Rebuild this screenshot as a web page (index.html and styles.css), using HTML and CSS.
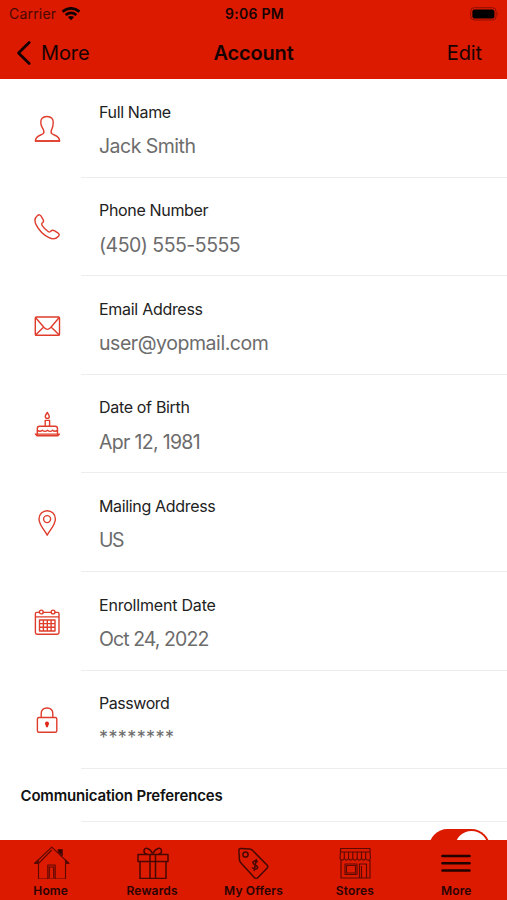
FILE: index.html
```html
<!DOCTYPE html>
<html lang="en">
<head>
<meta charset="utf-8">
<title>Account</title>
<link rel="stylesheet" href="styles.css">
</head>
<body>
<div class="screen">
  <header class="header">
    <div class="status">
      <div class="carrier"><span class="carrier-name">Carrier</span>
        <svg class="wifi" width="20" height="14" viewBox="0 0 20 14"><path d="M1.5 4.600Q10 -2 18.500 4.600M4.600 8Q10 3.800 15.400 8" fill="none" stroke="#100" stroke-width="2.6"/><path d="M6.900 10Q10 7.800 13.100 10L10 13.300Z" fill="#100"/></svg>
      </div>
      <div class="time">9:06 PM</div>
      <svg class="battery" width="30" height="14" viewBox="0 0 30 14"><rect x=".7" y=".7" width="25.4" height="12.3" rx="3.6" fill="none" stroke="#8f1000" stroke-width="1"/><rect x="2.4" y="2.4" width="22" height="9" rx="2" fill="#000"/><path d="M27.5 5q1.6 1.9 0 3.8z" fill="#8f1000"/></svg>
    </div>
    <nav class="nav">
      <div class="back"><svg width="16" height="26" viewBox="0 0 16 26"><path d="M13.2 2.5 2.5 13 13.2 23.5" fill="none" stroke="#140100" stroke-width="2.7" stroke-linecap="round" stroke-linejoin="round"/></svg><span class="back-label">More</span></div>
      <h1 class="title">Account</h1>
      <div class="edit">Edit</div>
    </nav>
  </header>
  <main class="list">
    <section class="row">
      <svg class="icon" viewBox="0 0 28 28"><path d="M14 1.500C9.500 1.500 7.500 4 7.800 8c.1 3 1.500 4.500 2.500 6.500.8 1.700.8 3.400-.3 4.300C8 20.500 2.600 20.400 2.400 26H26.600C26.400 20.400 21 20.500 19 18.800 17.900 17.900 17.900 16.200 18.700 14.500 19.700 12.500 20.100 11 20.200 8 20.500 4 18.500 1.500 14 1.500Z"/><path d="M2.500 26H26.500"/></svg>
      <div class="field"><div class="label l1">Full Name</div><div class="value v1">Jack Smith</div></div>
    </section>
    <section class="row">
      <svg class="icon" viewBox="0 0 28 28"><path d="M4.300 2.700C5.900 1.400 7 1.500 8.100 3.200L10 6.300c1 1.600.7 2.500-.5 3.500-1.200.9-1 1.700-.1 3 1.500 2.200 3.300 4 5.400 5.500 1.300 1 2.100 1.100 3-.1 1-1.200 2-1.400 3.500-.5l3.500 2.200c1.600 1 1.800 2.200.4 3.700-2.300 2.500-5.500 3-9.200 1.100C10.300 21.900 6 17.400 3.200 11.900 1.200 8 1.600 4.900 4.300 2.700Z"/></svg>
      <div class="field"><div class="label l2">Phone Number</div><div class="value v2">(450) 555-5555</div></div>
    </section>
    <section class="row">
      <svg class="icon" viewBox="0 0 28 28"><rect x="2.300" y="5" width="24.200" height="18.200" rx="1"/><path d="M2.700 5.800 11.300 15.800Q14.400 19 17.500 15.800L26 5.800M2.800 22.700 9.700 16M26 22.700 19.100 16"/></svg>
      <div class="field"><div class="label l3">Email Address</div><div class="value v3">user@yopmail.com</div></div>
    </section>
    <section class="row">
      <svg class="icon" viewBox="0 0 28 28"><path d="M14.300 2.500C12.700 4.800 11.600 6 12.500 7.500c.9 1.200 2.800 1.200 3.600 0C17 6 15.800 4.800 14.300 2.500ZM12.200 16.200V10.400H16.600V16.200M4.300 24V18.400Q4.300 16.200 6.500 16.200H22.300Q24.500 16.200 24.500 18.400V24M4.300 20c1.700 1.700 3.400 1.700 5.100.3 1.700 1.400 3.400 1.400 5.100 0 1.700 1.400 3.400 1.400 5.100 0 1.600 1.400 3.300 1.400 4.900-.3"/><path d="M2.400 24.100H26.500L24.800 25.800H4.100Z"/></svg>
      <div class="field"><div class="label l4">Date of Birth</div><div class="value v4">Apr 12, 1981</div></div>
    </section>
    <section class="row">
      <svg class="icon" viewBox="0 0 28 28"><path d="M14.200 26.200C11.400 20.900 6 15.700 6 9.900a8.200 8.200 0 0 1 16.400 0C22.400 15.700 17 20.900 14.200 26.200Z"/><circle cx="14.100" cy="10.100" r="3.500"/></svg>
      <div class="field"><div class="label l5">Mailing Address</div><div class="value v5">US</div></div>
    </section>
    <section class="row">
      <svg class="icon" viewBox="0 0 28 28"><path d="M6.300 4.400H3.800Q2.400 4.400 2.400 5.800V24.600Q2.400 26.200 4 26.200H24.400Q26 26.200 26 24.600V5.800Q26 4.400 24.600 4.400H22.100M10.300 4.400H18.100M2.400 8.900H26"/><circle cx="8.300" cy="4" r="1.900"/><circle cx="20.100" cy="4" r="1.900"/><path d="M6.500 12H22V23H6.500ZM6.500 15.600H22M6.500 19.300H22M10.400 12V23M14.300 12V23M18.100 12V23"/></svg>
      <div class="field"><div class="label l6">Enrollment Date</div><div class="value v6">Oct 24, 2022</div></div>
    </section>
    <section class="row">
      <svg class="icon" viewBox="0 0 28 28"><rect x="4.400" y="11.500" width="19.400" height="14.700" rx="1.500"/><path d="M8.200 11.300V7.800C8.200 4.200 10.300 2 14 2S19.800 4.200 19.800 7.800V11.300"/><path class="keyhole" d="M14 15.500a2.100 2.100 0 0 1 1.500 3.500L14.800 21.300H13.200L12.500 19a2.100 2.100 0 0 1 1.500-3.500Z"/></svg>
      <div class="field"><div class="label l7">Password</div><div class="value v7">********</div></div>
    </section>
    <h2 class="section-title"><span class="section-text">Communication Preferences</span></h2>
    <div class="preference"><div class="toggle"><div class="knob"></div></div></div>
  </main>
  <footer class="tabs">
    <div class="tab"><svg width="40" height="36" viewBox="0 0 40 36"><path d="M3.500 20.500 20.800 4.200 38 20.500H34.500V36H7.500V20.500ZM7.500 20.500 20.800 7M16.800 35.500V22H24.200V35.500M18.300 35V24H22.700V35M27.500 8V7H31V13"/><path d="M4 20 7.500 17V20ZM37.500 20 34.500 17V20ZM27.200 6.500H31.200V12.500L27.200 9Z" fill="#300500"/></svg><span class="tab-label t1">Home</span></div>
    <div class="tab"><svg class="strong" width="40" height="36" viewBox="0 0 40 36"><path d="M6 11.500H36V18.500H6ZM8 18.500V35.500H34V18.500M18 11.500V35.500M23.500 11.500V35.500M20.500 10.500C18 5 12 3.500 12 8Q12 11 15 11M21 10.500C23.500 5 29.500 3.500 29.500 8Q29.500 11 26.500 11"/></svg><span class="tab-label t2">Rewards</span></div>
    <div class="tab"><svg class="strong" width="40" height="36" viewBox="0 0 40 36"><path d="M7.500 5.500 16.500 6Q18.500 6.200 20 7.800L34 22Q35.500 23.700 34 25.300L24.500 35Q23 36.200 21.500 34.700L8 20Q6.500 18.300 6.400 16.500L5.900 7.300Q5.900 5.400 7.500 5.500Z"/><circle cx="12.500" cy="11.500" r="2.600"/><path d="M24.800 19Q22 16.500 20 19C19 22.500 25.500 21.500 24.600 25Q22.500 27.500 19 24.500M23.500 16 21 28"/></svg><span class="tab-label t3">My Offers</span></div>
    <div class="tab"><svg width="40" height="36" viewBox="0 0 40 36"><path d="M5.500 5.500H35V9H5.500ZM5.500 9 5 15.500Q7.200 19 9.300 15.500 11.400 19 13.600 15.500 15.700 19 17.800 15.500 20 19 22.200 15.500 24.300 19 26.500 15.500 28.600 19 30.700 15.500 33 19 35.500 15.500L35 9M9.300 15.500V9M13.600 15.500V9M17.800 15.500V9M22.200 15.500V9M26.500 15.500V9M30.700 15.500V9M6 17V35H35V17M10 21H22V31.500H10ZM11.500 22.500H20.500V30H11.500ZM24.500 35V21H31.500V35M26.500 35V23"/></svg><span class="tab-label t4">Stores</span></div>
    <div class="tab"><svg class="menu" width="40" height="36" viewBox="0 0 40 36"><path d="M6.500 13H33.500M6.500 20.300H33.500M6.500 27.500H33.500"/></svg><span class="tab-label t5">More</span></div>
  </footer>
</div>
</body>
</html>
```
FILE: styles.css
```css
* { box-sizing: border-box; }
body { margin: 0; font-family: Inter, "Liberation Sans", sans-serif; background: #fff; }
.screen { width: 507px; height: 900px; overflow: hidden; display: flex; flex-direction: column; }
.header { height: 79.3px; flex: none; background: #db1a00; color: #180200; }
.status { height: 27px; display: grid; grid-template-columns: 1fr auto 1fr; align-items: center; padding: 0 7px 0 9px; }
.carrier { display: flex; align-items: center; gap: 5px; font-size: 14px; }
.carrier-name { letter-spacing: .2px; color: #4a0800; }
.time { font-size: 14px; font-weight: 600; letter-spacing: .3px; }
.battery { justify-self: end; }
.nav { height: 51px; display: grid; grid-template-columns: 1fr auto 1fr; align-items: center; padding: 0 25px 0 16px; font-size: 20px; }
.back { display: flex; align-items: center; gap: 9px; }
.back-label { letter-spacing: -.1px; }
.title { margin: 0 -4.500px 0 4.500px; font-size: 20px; font-weight: 600; letter-spacing: -.15px; }
.edit { justify-self: end; letter-spacing: -.1px; }
.list { flex: 1; min-height: 0; overflow: hidden; }
.row { height: 98.6px; display: flex; align-items: center; padding-left: 33px; background: linear-gradient(#ededee, #ededee) 81px 100% / 426px 1.3px no-repeat; }
.icon { width: 28px; height: 28px; flex: none; margin-right: 38px; fill: none; stroke: #df3c2c; stroke-width: 1.4; stroke-linejoin: round; stroke-linecap: round; }
.icon .keyhole { fill: #df2818; stroke: none; }
.field { height: 98px; padding-top: 21px; white-space: nowrap; }
.label { font-size: 16px; line-height: 22px; color: #222; }
.value { font-size: 19.5px; line-height: 26px; margin-top: 10.500px; color: #6c6c6c; }
.l1 { letter-spacing: -.35px; }
.l2 { letter-spacing: -.33px; }
.l3 { letter-spacing: -.29px; }
.l4 { letter-spacing: -.32px; }
.l5 { letter-spacing: -.34px; }
.l6 { letter-spacing: -.2px; }
.l7 { letter-spacing: -.45px; }
.v1 { letter-spacing: -.52px; }
.v2 { letter-spacing: -.52px; }
.v3 { letter-spacing: -.45px; }
.v4 { letter-spacing: -.68px; }
.v5 { letter-spacing: -1.400px; }
.v6 { letter-spacing: -.93px; }
.v7 { font-size: 18px; letter-spacing: .4px; }
.section-title { margin: 0; height: 53px; display: flex; align-items: center; padding-left: 20.5px; font-size: 15px; font-weight: 600; letter-spacing: -.17px; color: #111; background: linear-gradient(#ededee, #ededee) 81px 100% / 426px 1.3px no-repeat; }
.preference { display: flex; justify-content: flex-end; padding: 6.500px 17px 0 0; }
.toggle { width: 61px; height: 37px; border-radius: 19px; background: #db1a00; padding: 2px; display: flex; justify-content: flex-end; }
.knob { width: 33px; height: 33px; border-radius: 50%; background: #fff; }
.tabs { height: 60px; flex: none; background: #db1a00; display: grid; grid-template-columns: repeat(5, 1fr); padding-top: 3px; }
.tab { display: flex; flex-direction: column; align-items: center; color: #2a0400; }
.tab svg { fill: none; stroke: #5c0a00; stroke-width: 1.1; stroke-linejoin: round; }
.tab .strong { stroke: #480800; stroke-width: 1.5; }
.tab .menu { stroke: #200300; stroke-width: 2.6; stroke-linecap: round; }
.tab-label { font-size: 12px; line-height: 16px; font-weight: 600; margin-top: 4px; letter-spacing: .15px; }
```
